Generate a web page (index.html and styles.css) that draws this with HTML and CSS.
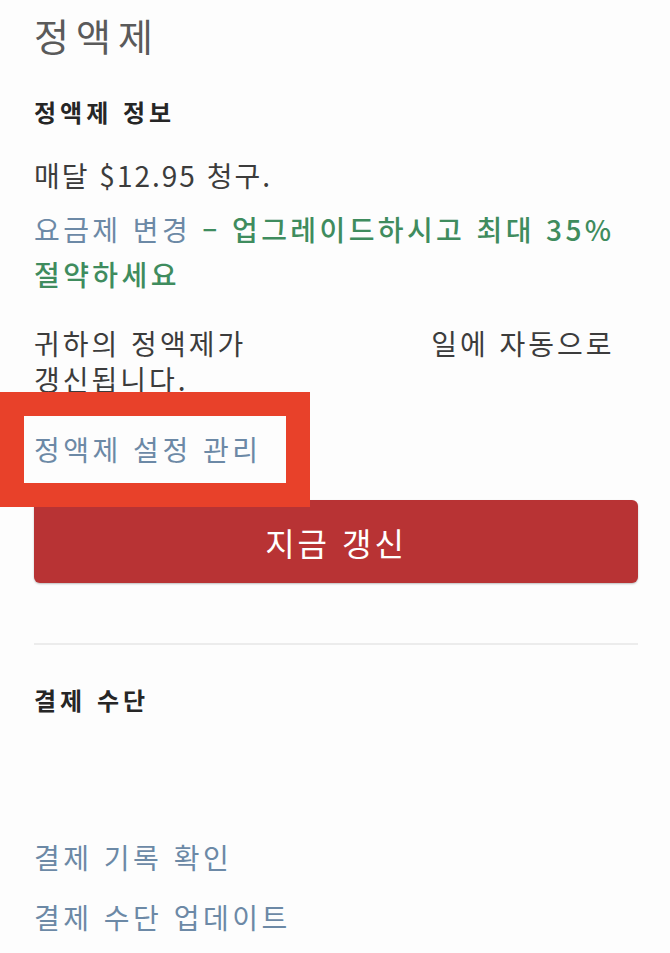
FILE: index.html
```html
<!DOCTYPE html>
<html lang="ko">
<head>
<meta charset="utf-8">
<title>정액제</title>
<link rel="stylesheet" href="styles.css">
</head>
<body>
<main class="page">
  <h1 class="title">정액제</h1>

  <h2 class="section-title">정액제 정보</h2>
  <p class="price">매달 $12.95 청구.</p>
  <p class="upgrade"><a class="link" href="#">요금제 변경</a><span class="promo"> – 업그레이드하시고 최대 35% 절약하세요</span></p>
  <p class="renew">귀하의 정액제가<span class="redacted"></span>일에 자동으로 갱신됩니다.</p>

  <div class="manage">
    <a class="link" href="#">정액제 설정 관리</a>
    <div class="highlight"></div>
  </div>

  <button class="renew-btn" type="button">지금 갱신</button>

  <hr class="divider">

  <h2 class="section-title pay-title">결제 수단</h2>
  <div class="card-redacted"></div>

  <ul class="pay-links">
    <li><a class="link" href="#">결제 기록 확인</a></li>
    <li><a class="link" href="#">결제 수단 업데이트</a></li>
  </ul>
</main>
</body>
</html>
```

FILE: styles.css
```css
html, body {
  margin: 0;
  padding: 0;
}

body {
  background: #fdfdfd;
  font-family: "Noto Sans CJK KR", "Noto Sans", sans-serif;
  color: #3c3c3c;
  word-break: keep-all;
}

.page {
  padding: 0 32px 0 34px;
  display: flex;
  flex-direction: column;
}

.title {
  margin: 10px 0 0;
  font-size: 38px;
  line-height: 50px;
  font-weight: 400;
  letter-spacing: 7px;
  color: #5a5a5a;
}

.section-title {
  margin: 37px 0 0;
  font-size: 24px;
  line-height: 30px;
  font-weight: 700;
  letter-spacing: 4px;
  color: #262626;
}

.price,
.upgrade,
.renew {
  margin: 0;
  font-size: 28px;
}

.price {
  margin-top: 28px;
  line-height: 40px;
  letter-spacing: 2px;
}

.upgrade {
  margin-top: 12px;
  line-height: 45px;
  letter-spacing: 3.4px;
}

.link {
  color: #6c89a6;
  text-decoration: none;
}

.promo {
  color: #3f8c5e;
  font-weight: 500;
}

.renew {
  margin-top: 28px;
  line-height: 36px;
  letter-spacing: 3px;
}

.redacted {
  display: inline-block;
  width: 185px;
}

.manage {
  position: relative;
  margin-top: 32px;
  font-size: 28px;
  line-height: 40px;
  letter-spacing: 3.5px;
}

.highlight {
  position: absolute;
  left: -34px;
  top: -37px;
  width: 310px;
  height: 115px;
  box-sizing: border-box;
  border: 24px solid #e8412a;
  pointer-events: none;
}

.renew-btn {
  margin-top: 31px;
  height: 83px;
  width: 100%;
  border: none;
  border-radius: 6px;
  background: #b83334;
  color: #ffffff;
  font-family: inherit;
  font-size: 32px;
  letter-spacing: 3px;
  box-shadow: 0 1px 2px rgba(0, 0, 0, 0.25);
}

.divider {
  margin: 60px 0 0;
  border: none;
  height: 2px;
  background: #ececec;
}

.pay-title {
  margin-top: 40px;
}

.card-redacted {
  height: 120px;
}

.pay-links {
  list-style: none;
  margin: 0;
  padding: 0;
  display: flex;
  flex-direction: column;
  gap: 16px;
  font-size: 28px;
  line-height: 44px;
  letter-spacing: 3.5px;
}
```
